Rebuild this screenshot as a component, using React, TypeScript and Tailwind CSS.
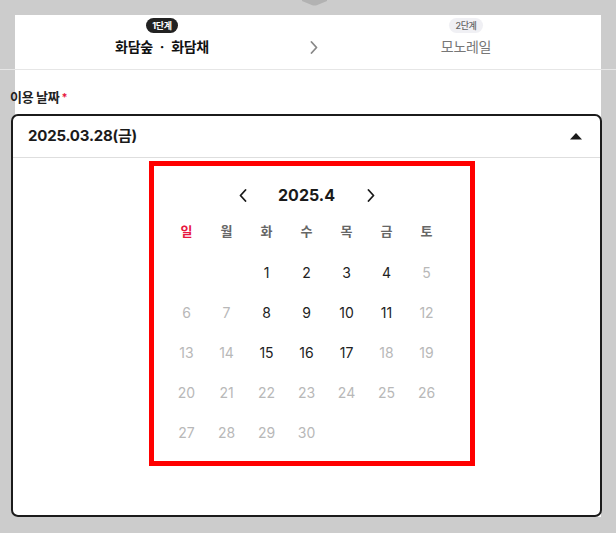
import React from "react";

const FONT = "Inter, 'Noto Sans CJK KR', sans-serif";

type Day = { d: number; on: boolean } | null;

const ACTIVE = [1, 2, 3, 4, 8, 9, 10, 11, 15, 16, 17];

function buildMonth(): Day[][] {
  // April 2025 starts on Tuesday
  const cells: Day[] = [null, null];
  for (let d = 1; d <= 30; d++) cells.push({ d, on: ACTIVE.includes(d) });
  while (cells.length % 7) cells.push(null);
  const rows: Day[][] = [];
  for (let i = 0; i < cells.length; i += 7) rows.push(cells.slice(i, i + 7));
  return rows;
}

const WEEK = ["일", "월", "화", "수", "목", "금", "토"];

function Chevron({ dir, className }: { dir: "left" | "right"; className?: string }) {
  return (
    <svg width="8" height="13" viewBox="0 0 8 13" className={className} fill="none">
      <path
        d={dir === "left" ? "M6.5 1 L1.5 6.5 L6.5 12" : "M1.5 1 L6.5 6.5 L1.5 12"}
        stroke="currentColor"
        strokeWidth="1.8"
        strokeLinecap="round"
        strokeLinejoin="round"
      />
    </svg>
  );
}

function StepHeader() {
  return (
    <div className="mx-[15px] h-[54px] bg-white flex pl-[71px]">
      <div className="w-[152px] flex flex-col items-center pt-[3px]">
        <span className="h-[15px] px-[6px] rounded-full bg-[#222] text-white text-[9px] font-bold leading-[15px] tracking-[-0.3px]">
          1단계
        </span>
        <span className="mt-[4px] text-[14px] font-bold leading-[20px] text-[#111] tracking-[-0.3px]">
          화담숲<span className="mx-[7px]">·</span>화담채
        </span>
      </div>
      <div className="w-[152px] flex justify-center pt-[26px] text-[#888]">
        <Chevron dir="right" />
      </div>
      <div className="w-[152px] flex flex-col items-center pt-[3px]">
        <span className="h-[15px] px-[6px] rounded-full bg-[#f0f0f4] text-[#666] text-[9px] font-medium leading-[15px] tracking-[-0.3px]">
          2단계
        </span>
        <span className="mt-[4px] text-[14px] leading-[20px] text-[#777] tracking-[-0.3px]">
          모노레일
        </span>
      </div>
    </div>
  );
}

function Calendar() {
  const rows = buildMonth();
  return (
    <div className="relative flex flex-col items-center pt-[25px] pb-[63px]">
      <div className="flex items-center h-[24px] text-[#1a1a1a]">
        <div className="w-[24px] flex justify-center">
          <Chevron dir="left" />
        </div>
        <div className="w-[104px] text-center text-[16px] font-bold leading-[24px]">2025.4</div>
        <div className="w-[24px] flex justify-center">
          <Chevron dir="right" />
        </div>
      </div>
      <div className="mt-[12px] grid grid-cols-[repeat(7,40px)] h-[24px]">
        {WEEK.map((w, i) => (
          <div
            key={w}
            className={`text-center text-[13px] font-semibold leading-[24px] ${
              i === 0 ? "text-[#e8173f]" : "text-[#666]"
            }`}
          >
            {w}
          </div>
        ))}
      </div>
      <div className="mt-[9px] flex flex-col">
        {rows.map((row, r) => (
          <div key={r} className="grid grid-cols-[repeat(7,40px)] h-[40px]">
            {row.map((c, i) => (
              <div
                key={i}
                className={`flex items-center justify-center text-[14px] ${
                  c?.on ? "text-[#222]" : "text-[#b8b8b8]"
                }`}
              >
                {c ? c.d : ""}
              </div>
            ))}
          </div>
        ))}
      </div>
      <div className="absolute left-[136px] top-[3px] w-[326px] h-[305px] border-[5px] border-[#ff0000] pointer-events-none" />
    </div>
  );
}

export default function App() {
  return (
    <div className="relative min-h-[533px] bg-[#cccccc] pt-[15px]" style={{ fontFamily: FONT }}>
      <svg className="absolute left-[302px] top-0" width="25" height="6" viewBox="0 0 25 6">
        <polygon points="0,0 25,0 25,1 14,5.5 11,5.5 0,1" fill="#b2b2b2" />
      </svg>

      <StepHeader />
      <div className="h-px bg-[#e6e6e6]" />

      <div className="mx-[15px] bg-white pt-[18px]">
        <div className="-ml-[5px] text-[13px] font-bold leading-[18px] text-[#222] tracking-[-0.3px]">
          이용 날짜<span className="text-[#e8173f] text-[11px] align-top ml-[2px]">*</span>
        </div>
        <div className="mt-[8px] -ml-[4px] -mr-[1px] border-2 border-[#1b1b1b] rounded-[7px] bg-white">
          <div className="h-[41px] flex items-center justify-between pl-[15px] pr-[18px]">
            <span className="text-[15px] font-bold text-[#1a1a1a] tracking-[-0.2px]">2025.03.28(금)</span>
            <svg width="12" height="7" viewBox="0 0 12 7">
              <polygon points="6,0 12,6.5 0,6.5" fill="#1a1a1a" />
            </svg>
          </div>
          <div className="h-px bg-[#dedede]" />
          <Calendar />
        </div>
      </div>
    </div>
  );
}
